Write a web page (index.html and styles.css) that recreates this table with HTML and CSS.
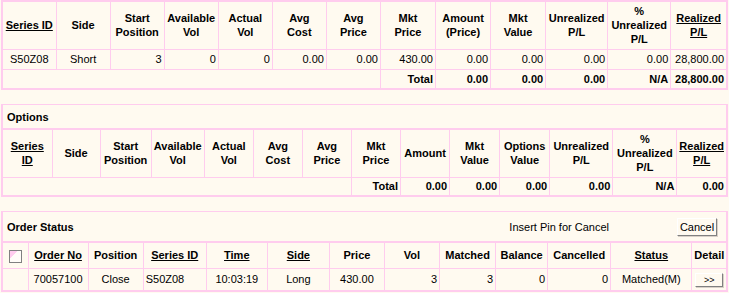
FILE: index.html
```html
<!DOCTYPE html>
<html>
<head>
<meta charset="utf-8">
<link rel="stylesheet" href="styles.css">
</head>
<body>
<div class="page">
  <table class="grid pos">
    <colgroup>
      <col style="width:54px"><col style="width:54px"><col style="width:54px"><col style="width:54px"><col style="width:54px"><col style="width:54px"><col style="width:54px"><col style="width:55px"><col style="width:55px"><col style="width:55px"><col style="width:62px"><col style="width:63px"><col style="width:56px">
    </colgroup>
    <tr class="head">
      <th><u>Series ID</u></th><th>Side</th><th>Start Position</th><th>Available Vol</th><th>Actual Vol</th><th>Avg<br>Cost</th><th>Avg<br>Price</th><th>Mkt<br>Price</th><th>Amount (Price)</th><th>Mkt Value</th><th>Unrealized P/L</th><th>% Unrealized P/L</th><th><u>Realized P/L</u></th>
    </tr>
    <tr class="row">
      <td class="c">S50Z08</td><td class="c">Short</td><td class="r">3</td><td class="r">0</td><td class="r">0</td><td class="r">0.00</td><td class="r">0.00</td><td class="r">430.00</td><td class="r">0.00</td><td class="r">0.00</td><td class="r">0.00</td><td class="r">0.00</td><td class="r">28,800.00</td>
    </tr>
    <tr class="row total">
      <td colspan="7"></td><td class="r">Total</td><td class="r">0.00</td><td class="r">0.00</td><td class="r">0.00</td><td class="r">N/A</td><td class="r">28,800.00</td>
    </tr>
  </table>

  <section class="section opts">
    <div class="bar"><b>Options</b></div>
    <table class="grid">
      <colgroup>
        <col style="width:50px"><col style="width:48px"><col style="width:51px"><col style="width:53px"><col style="width:49px"><col style="width:49px"><col style="width:49px"><col style="width:49px"><col style="width:49px"><col style="width:50px"><col style="width:50px"><col style="width:63px"><col style="width:64px"><col style="width:50px">
      </colgroup>
      <tr class="head">
        <th><u>Series ID</u></th><th>Side</th><th>Start Position</th><th>Available Vol</th><th>Actual Vol</th><th>Avg<br>Cost</th><th>Avg<br>Price</th><th>Mkt<br>Price</th><th>Amount</th><th>Mkt Value</th><th>Options Value</th><th>Unrealized P/L</th><th>% Unrealized P/L</th><th><u>Realized P/L</u></th>
      </tr>
      <tr class="row2 total">
        <td colspan="7"></td><td class="r">Total</td><td class="r">0.00</td><td class="r">0.00</td><td class="r">0.00</td><td class="r">0.00</td><td class="r">N/A</td><td class="r">0.00</td>
      </tr>
    </table>
  </section>

  <section class="section orders">
    <div class="bar bar-tall">
      <b>Order Status</b>
      <span class="pin">Insert Pin for Cancel</span>
      <button class="btn cancel" type="button">Cancel</button>
    </div>
    <table class="grid">
      <colgroup>
        <col style="width:26px"><col style="width:60px"><col style="width:55px"><col style="width:63px"><col style="width:61px"><col style="width:62px"><col style="width:55px"><col style="width:55px"><col style="width:56px"><col style="width:52px"><col style="width:63px"><col style="width:81px"><col style="width:35px">
      </colgroup>
      <tr class="ohead">
        <th><span class="chk"></span></th><th><u>Order No</u></th><th>Position</th><th><u>Series ID</u></th><th><u>Time</u></th><th><u>Side</u></th><th>Price</th><th>Vol</th><th>Matched</th><th>Balance</th><th>Cancelled</th><th><u>Status</u></th><th>Detail</th>
      </tr>
      <tr class="orow">
        <td></td><td class="c">70057100</td><td class="c">Close</td><td class="l">S50Z08</td><td class="c">10:03:19</td><td class="c">Long</td><td class="c">430.00</td><td class="r">3</td><td class="r">3</td><td class="r">0</td><td class="r">0</td><td class="c">Matched(M)</td><td class="c"><button class="btn more" type="button">&gt;&gt;</button></td>
      </tr>
    </table>
  </section>
</div>
</body>
</html>
```

FILE: styles.css
```css
* { box-sizing: border-box; }
html, body { margin: 0; padding: 0; background: #fffaf0; }
body {
  font-family: "Liberation Sans", Arial, sans-serif;
  font-size: 11px;
  color: #000;
  width: 729px;
  height: 293px;
  overflow: hidden;
}
.page { padding-left: 1px; width: 729px; }

.grid {
  border-collapse: collapse;
  table-layout: fixed;
  width: 727px;
  border: 2px solid #ffccee;
}
.grid th, .grid td {
  border: 1px solid #ffccee;
  padding: 0 2px;
  line-height: 14px;
  overflow: hidden;
  white-space: normal;
}
.grid th { font-weight: bold; text-align: center; vertical-align: middle; }
.grid u { text-decoration: underline; }

.head th { height: 48px; }
.row td { height: 20px; }
.row2 td { height: 19px; }
.total td { font-weight: bold; }

.c { text-align: center; }
.r { text-align: right; }
.l { text-align: left; }

.section { margin-top: 14px; }
.bar {
  border-top: 1px solid #ffccee;
  border-left: 2px solid #ffccee;
  border-right: 2px solid #ffccee;
  width: 727px;
  height: 24px;
  display: flex;
  align-items: center;
  padding-left: 4px;
  padding-top: 1px;
}
.bar-tall { height: 30px; }
.pin { margin-left: auto; margin-right: 68px; }
.cancel { margin-right: 9px; }

.btn {
  font-family: "Liberation Sans", Arial, sans-serif;
  background: #fffaf0;
  border: 1px solid;
  border-color: #ffffff #808080 #808080 #ffffff;
  box-shadow: 1px 1px 0 #d8d0c8;
  padding: 0;
  color: #000;
}
.cancel { width: 40px; height: 18px; font-size: 11px; }
.more { width: 28px; height: 14px; font-size: 9px; line-height: 10px; }

.ohead th { height: 26px; }
.orow td { height: 23px; }

.chk {
  display: inline-block;
  width: 13px;
  height: 13px;
  border: 1px solid #808080;
  background: linear-gradient(135deg, #ffccee 0 35%, #fffcf8 35%);
  vertical-align: middle;
}
```
